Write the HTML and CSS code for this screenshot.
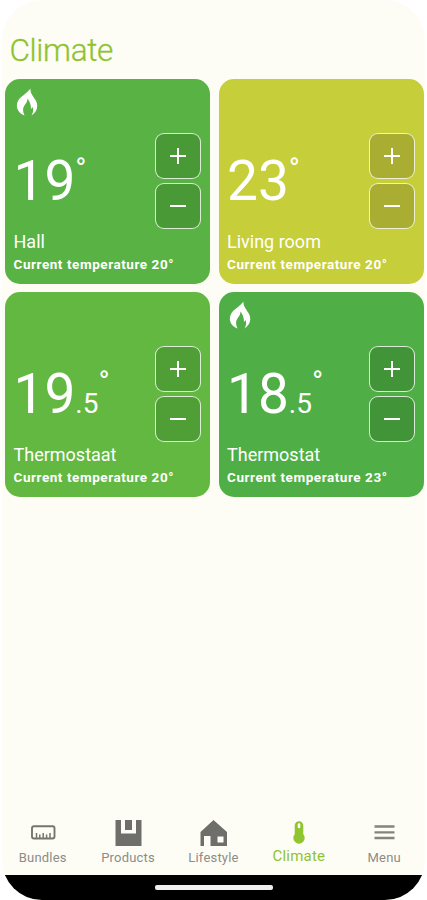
FILE: index.html
```html
<!DOCTYPE html>
<html lang="en">
<head>
<meta charset="utf-8">
<title>Climate</title>
<link rel="stylesheet" href="styles.css">
</head>
<body>
<svg class="defs" aria-hidden="true">
  <symbol id="flame" viewBox="0 0 22 28"><path d="M14.500 0.500C14 5 17 8 19.500 12C23 18 21 24 15.500 27.500C17.500 24 17.500 21 16.500 19C16 20 15.500 20.500 15 21C15 16 13.500 13.500 11.500 10.500C11.500 15 8 17 7.300 20C6.700 22.500 7.300 25 8.500 27.500C2 25 -1 19 2 13C4.500 8 10 6.500 14.500 0.500Z" fill="currentColor"/></symbol>
</svg>
<div class="phone">
  <h1 class="title">Climate</h1>
  <main class="grid">
    <section class="card hall">
      <svg class="flame"><use href="#flame"/></svg>
      <div class="temp">19<sup>°</sup></div>
      <div class="controls"><button class="plus" aria-label="Raise"></button><button aria-label="Lower"></button></div>
      <div class="name">Hall</div>
      <div class="current">Current temperature 20°</div>
    </section>
    <section class="card living">
      <div class="temp">23<sup>°</sup></div>
      <div class="controls"><button class="plus" aria-label="Raise"></button><button aria-label="Lower"></button></div>
      <div class="name">Living room</div>
      <div class="current">Current temperature 20°</div>
    </section>
    <section class="card thermostaat">
      <div class="temp">19<small>.5</small><sup>°</sup></div>
      <div class="controls"><button class="plus" aria-label="Raise"></button><button aria-label="Lower"></button></div>
      <div class="name">Thermostaat</div>
      <div class="current">Current temperature 20°</div>
    </section>
    <section class="card thermostat">
      <svg class="flame"><use href="#flame"/></svg>
      <div class="temp">18<small>.5</small><sup>°</sup></div>
      <div class="controls"><button class="plus" aria-label="Raise"></button><button aria-label="Lower"></button></div>
      <div class="name">Thermostat</div>
      <div class="current">Current temperature 23°</div>
    </section>
  </main>
  <nav class="tabs">
    <a class="tab"><svg viewBox="0 0 28 28"><rect x="3" y="8.300" width="22.500" height="12.200" rx="2" fill="none" stroke="#747470" stroke-width="1.900"/><path d="M7.500 15v5M10.800 16.500v3.500M14.200 15v5M17.600 16.500v3.500M21 15v5" stroke="#747470" stroke-width="1.500"/></svg><span>Bundles</span></a>
    <a class="tab"><svg viewBox="0 0 28 28"><path d="M1.500 2H7v13.500h15V2h5.500v26h-26zM11 2h7v10h-7z" fill="#6e6e6a"/></svg><span>Products</span></a>
    <a class="tab"><svg viewBox="0 0 28 28"><path d="M14.500 2L28 14v14H11.500V18H5v10H1.500V14zM18.500 18.500v6h6v-6z" fill="#6e6e6a" fill-rule="evenodd"/></svg><span>Lifestyle</span></a>
    <a class="tab active"><svg viewBox="0 0 28 28"><path d="M9.700 7.500a4.300 4.300 0 0 1 8.600 0v8.700a5.700 5.700 0 1 1-8.600 0z" fill="#8fc52f"/><path d="M14 6.500v2.500" stroke="#fefdf5" stroke-width="2.600" stroke-linecap="round"/></svg><span>Climate</span></a>
    <a class="tab"><svg viewBox="0 0 28 28"><path d="M4.500 8.500h20M4.500 14.300h20M4.500 20h20" stroke="#838380" stroke-width="2.300"/></svg><span>Menu</span></a>
  </nav>
  <div class="system"><div class="handle"></div></div>
</div>
</body>
</html>
```

FILE: styles.css
```css
* { box-sizing: border-box; }
body { margin: 0; background: #fff; font-family: Roboto, sans-serif; }
.defs { display: none; }
.phone {
  width: 423px;
  height: 900px;
  margin-left: 2px;
  display: flex;
  flex-direction: column;
  overflow: hidden;
  border-radius: 40px;
  background: #fefdf5;
}
.title {
  height: 79px;
  margin: 0;
  padding: 32px 0 0 7.500px;
  font-size: 31.500px;
  font-weight: 300;
  line-height: 38px;
  letter-spacing: -0.350px;
  color: #8ec32f;
  -webkit-text-stroke: 0.300px #8ec32f;
}
.grid {
  display: grid;
  grid-template-columns: 205px 205px;
  grid-auto-rows: 204.500px;
  gap: 8.500px;
  padding-left: 3px;
}
.card {
  display: grid;
  grid-template: 54px 97px 24px 1fr / 1fr 46px;
  padding: 0 9px 0 8.500px;
  border-radius: 15px;
  color: #fff;
}
.hall { background: #58b344; --key: #4a9937; }
.living { background: #c6ce39; --key: #a9ad31; }
.thermostaat { background: #63b842; --key: #509f36; }
.thermostat { background: #4faf46; --key: #429439; }
.flame { grid-area: 1 / 1; width: 22px; height: 28px; margin: 8.500px 0 0 2px; }
.temp {
  grid-area: 2 / 1;
  padding-top: 16px;
  font-size: 55px;
  line-height: 64px;
  white-space: nowrap;
}
.temp small { font-size: 28px; }
.temp sup { font-size: 30px; line-height: 0; vertical-align: 21px; }
.controls { grid-area: 2 / 2; display: flex; flex-direction: column; gap: 4px; }
.controls button {
  height: 46px;
  flex: none;
  display: grid;
  place-items: center;
  padding: 0;
  border: 1px solid rgba(255, 255, 255, 0.8);
  border-radius: 9px;
  background: var(--key);
}
.controls button::before, .plus::after {
  content: "";
  grid-area: 1 / 1;
  width: 16px;
  height: 2px;
  background: #fff;
}
.controls .plus::after { width: 2px; height: 16px; }
.name { grid-area: 3 / 1 / auto / 3; font-size: 18px; line-height: 24px; }
.current { grid-area: 4 / 1 / auto / 3; font-size: 13.500px; line-height: 21px; font-weight: 700; letter-spacing: 0.560px; }
.tabs {
  flex: 1;
  display: grid;
  grid-template-columns: repeat(5, 85.400px);
  align-items: end;
  margin-left: -2px;
  padding-bottom: 8px;
}
.tab { display: flex; flex-direction: column; align-items: center; color: #8c8c88; font-size: 13px; line-height: 18px; letter-spacing: 0.200px; }
.tab svg { width: 28px; height: 28px; margin-bottom: 3px; }
.active { color: #8ec32f; font-size: 15px; }
.active span { position: relative; top: -2px; }
.system { height: 25px; background: #000; display: flex; justify-content: center; }
.handle { width: 118px; height: 5px; margin-top: 10px; border-radius: 2px; background: #eee; }
```
